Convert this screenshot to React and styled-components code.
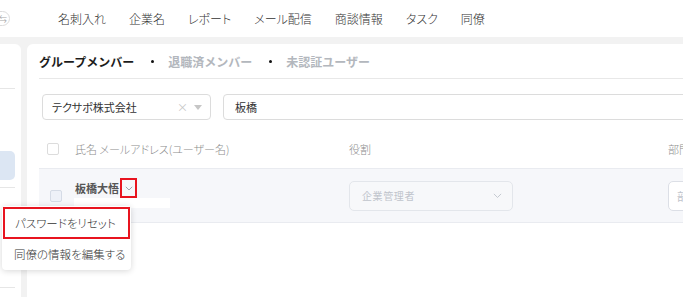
import React from 'react';
import styled, { createGlobalStyle } from 'styled-components';

const Global = createGlobalStyle`
  html, body {
    margin: 0;
    padding: 0;
    background: #f2f2f2;
    overflow: hidden;
  }
  body {
    font-family: "Noto Sans CJK JP", "Noto Sans", sans-serif;
    font-feature-settings: "palt";
    width: 683px;
    height: 297px;
  }
`;

const Header = styled.header`
  height: 37px;
  background: #ffffff;
  display: flex;
  align-items: center;
`;

const RoundButton = styled.div`
  width: 18px;
  height: 15px;
  margin-left: -8px;
  border: 1px solid #dcdcdc;
  border-radius: 9px;
  display: flex;
  align-items: center;
  justify-content: flex-end;
  padding-right: 2px;
  box-sizing: border-box;
  font-size: 8px;
  color: #aaa;
`;

const Nav = styled.nav`
  display: flex;
  gap: 23px;
  margin-left: 48px;
`;

const NavItem = styled.span`
  font-size: 12px;
  color: #333;
  font-weight: 300;
  white-space: nowrap;
`;

const Body = styled.div`
  display: flex;
  padding-top: 7px;
  gap: 6px;
  height: 253px;
`;

const Sidebar = styled.aside`
  width: 21px;
  flex-shrink: 0;
  background: #ffffff;
  border-radius: 0 6px 0 0;
  padding-right: 6px;
  box-sizing: border-box;
`;

const SideLine = styled.div`
  height: 1px;
  background: #e6e6e6;
  margin-top: ${(p) => p.$top}px;
`;

const SideSelected = styled.div`
  height: 29px;
  background: #dce6f3;
  border-radius: 0 5px 5px 0;
  margin-top: ${(p) => p.$top}px;
`;

const Card = styled.main`
  width: 720px;
  flex-shrink: 0;
  background: #ffffff;
  border-radius: 6px 6px 0 0;
  padding-left: 12px;
  box-sizing: border-box;
`;

const Tabs = styled.div`
  display: flex;
  align-items: center;
  height: 35px;
  border-bottom: 1px solid #e8e8e8;
  padding-top: 1px;
  box-sizing: border-box;
`;

const Tab = styled.span`
  font-size: 12px;
  font-weight: 700;
  font-feature-settings: normal;
  color: ${(p) => (p.$active ? '#1c1c1c' : '#b3b7bd')};
  white-space: nowrap;
`;

const Dot = styled.span`
  width: 3px;
  height: 3px;
  border-radius: 50%;
  background: #111;
  margin: 0 14px 0 17px;
`;

const Filters = styled.div`
  display: flex;
  gap: 12px;
  margin-top: 15px;
  padding-left: 3px;
`;

const Select = styled.div`
  width: 169px;
  height: 26px;
  box-sizing: border-box;
  border: 1px solid #dcdcdc;
  border-radius: 4px;
  display: flex;
  align-items: center;
  padding: 0 8px 0 9px;
  font-size: 11px;
  color: #333;
`;

const Grow = styled.span`
  flex: 1;
  white-space: nowrap;
`;

const Clear = styled.span`
  color: #c6c6c6;
  font-size: 11px;
  margin-right: 6px;
`;

const Caret = styled.span`
  width: 0;
  height: 0;
  border-left: 4px solid transparent;
  border-right: 4px solid transparent;
  border-top: 5px solid #c6c6c6;
`;

const Search = styled.div`
  width: 520px;
  height: 26px;
  box-sizing: border-box;
  border: 1px solid #dcdcdc;
  border-radius: 4px;
  display: flex;
  align-items: center;
  padding-left: 11px;
  font-size: 11px;
  color: #333;
`;

const Row = styled.div`
  display: grid;
  grid-template-columns: 310px 319px 1fr;
  align-items: center;
  height: ${(p) => p.$h}px;
  background: ${(p) => (p.$shaded ? '#f6f7fa' : '#ffffff')};
  border-top: ${(p) => (p.$shaded ? '1px solid #e9ebf0' : 'none')};
  border-bottom: ${(p) => (p.$shaded ? '1px solid #e9ebf0' : 'none')};
  box-sizing: border-box;
  margin-top: ${(p) => p.$mt || 0}px;
`;

const NameCell = styled.div`
  display: flex;
  align-items: center;
  padding-left: ${(p) => p.$pl}px;
`;

const Check = styled.span`
  width: 10px;
  height: 10px;
  border: 1px solid ${(p) => (p.$filled ? '#d5dbe6' : '#dcdcdc')};
  background: ${(p) => (p.$filled ? '#eef1f8' : '#fff')};
  border-radius: 2px;
  flex-shrink: 0;
  margin-right: ${(p) => p.$mr}px;
`;

const HeadText = styled.span`
  font-size: 11px;
  color: #8c8c8c;
  font-weight: 300;
  white-space: nowrap;
`;

const NameBlock = styled.div`
  display: flex;
  flex-direction: column;
  margin-top: -5px;
`;

const NameLine = styled.div`
  display: flex;
  align-items: center;
  height: 20px;
`;

const Name = styled.span`
  font-size: 11px;
  font-weight: 700;
  color: #555;
`;

const ChevronBox = styled.span`
  width: 17px;
  height: 20px;
  box-sizing: border-box;
  border: 2px solid #e8141f;
  margin-left: 1px;
  display: flex;
  align-items: center;
  justify-content: center;
`;

const EmailBar = styled.div`
  width: 96px;
  height: 10px;
  background: #ffffff;
  margin-left: -1px;
`;

const RoleSelect = styled.div`
  width: 164px;
  height: 30px;
  box-sizing: border-box;
  border: 1px solid #e3e6eb;
  border-radius: 5px;
  background: #f7f8fa;
  display: flex;
  align-items: center;
  padding: 0 10px 0 12px;
  font-size: 10px;
  color: #c0c4cc;
  letter-spacing: 0.6px;
`;

const DeptInput = styled.div`
  width: 80px;
  height: 30px;
  box-sizing: border-box;
  border: 1px solid #dcdfe6;
  border-radius: 5px;
  background: #fff;
  display: flex;
  align-items: center;
  padding-left: 8px;
  font-size: 11px;
  color: #c0c4cc;
`;

const Menu = styled.div`
  position: absolute;
  left: 2px;
  top: 206px;
  width: 129px;
  height: 64px;
  background: #ffffff;
  border-radius: 4px;
  box-shadow: 0 1px 6px rgba(0, 0, 0, 0.16);
  padding-top: 1px;
  box-sizing: border-box;
  z-index: 5;
`;

const MenuItem = styled.div`
  height: ${(p) => (p.$marked ? 32 : 29)}px;
  margin: ${(p) => (p.$marked ? '0 1px' : '0')};
  border: ${(p) => (p.$marked ? '2px solid #e8141f' : 'none')};
  box-sizing: border-box;
  display: flex;
  align-items: center;
  padding-left: ${(p) => (p.$marked ? 10 : 12)}px;
  font-size: 11.5px;
  color: #333;
  font-weight: 300;
  white-space: nowrap;
`;

const Chevron = ({ size = 8, color = '#8a8f99' }) => (
  <svg width={size} height={size * 0.6} viewBox="0 0 10 6" fill="none">
    <path d="M1 1l4 4 4-4" stroke={color} strokeWidth="1" />
  </svg>
);

const navItems = ['名刺入れ', '企業名', 'レポート', 'メール配信', '商談情報', 'タスク', '同僚'];

export default function App() {
  return (
    <>
      <Global />
      <Header>
        <RoundButton>⇆</RoundButton>
        <Nav>
          {navItems.map((n) => (
            <NavItem key={n}>{n}</NavItem>
          ))}
        </Nav>
      </Header>
      <Body>
        <Sidebar>
          <SideLine $top={44} />
          <SideSelected $top={62} />
          <SideLine $top={7} />
          <SideLine $top={99} />
        </Sidebar>
        <Card>
          <Tabs>
            <Tab $active>グループメンバー</Tab>
            <Dot />
            <Tab>退職済メンバー</Tab>
            <Dot />
            <Tab>未認証ユーザー</Tab>
          </Tabs>
          <Filters>
            <Select>
              <Grow>テクサポ株式会社</Grow>
              <Clear>×</Clear>
              <Caret />
            </Select>
            <Search>板橋</Search>
          </Filters>
          <Row $h={38} $mt={10}>
            <NameCell $pl={8}>
              <Check $mr={16} />
              <HeadText>氏名 メールアドレス(ユーザー名)</HeadText>
            </NameCell>
            <HeadText>役割</HeadText>
            <HeadText>部門</HeadText>
          </Row>
          <Row $h={55} $shaded>
            <NameCell $pl={11}>
              <Check $filled $mr={13} />
              <NameBlock>
                <NameLine>
                  <Name>板橋大悟</Name>
                  <ChevronBox>
                    <Chevron />
                  </ChevronBox>
                </NameLine>
                <EmailBar />
              </NameBlock>
            </NameCell>
            <RoleSelect>
              <Grow>企業管理者</Grow>
              <Chevron size={9} color="#c0c4cc" />
            </RoleSelect>
            <DeptInput>部門</DeptInput>
          </Row>
        </Card>
      </Body>
      <Menu>
        <MenuItem $marked>パスワードをリセット</MenuItem>
        <MenuItem>同僚の情報を編集する</MenuItem>
      </Menu>
    </>
  );
}
